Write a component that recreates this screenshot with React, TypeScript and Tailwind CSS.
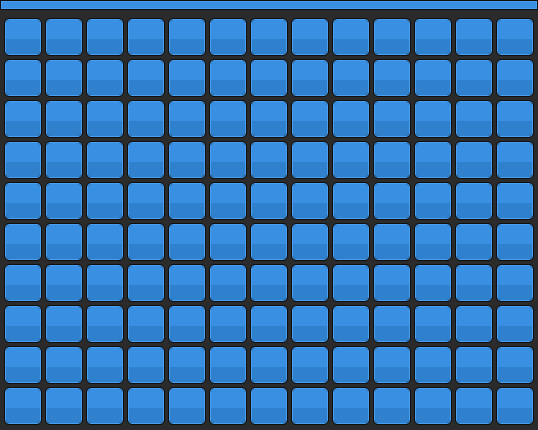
import React from "react";

const cells = Array.from({ length: 130 }, (_, i) => i);

function Tile() {
  return (
    <div className="h-[38px] w-[38px] rounded-[5px] border border-[#0f0f0f] bg-[#0f0f0f]">
      <div className="flex h-full w-full flex-col overflow-hidden rounded-[4px] border border-[#4b9ff0]">
        <div className="h-[19px] bg-[#3990e3]" />
        <div className="flex-1 bg-[#2f80cd]" />
      </div>
    </div>
  );
}

export default function App() {
  return (
    <div className="flex h-[430px] w-[538px] flex-col bg-[#2b2b2b]">
      <div className="h-[10px] w-full border border-[#0f0f0f] bg-[#0f0f0f]">
        <div className="h-full w-full border border-[#4b9ff0] bg-[#3990e3]" />
      </div>
      <div className="grid grid-cols-[repeat(13,38px)] gap-[3px] pl-[4px] pt-[8px]">
        {cells.map((i) => (
          <Tile key={i} />
        ))}
      </div>
    </div>
  );
}
